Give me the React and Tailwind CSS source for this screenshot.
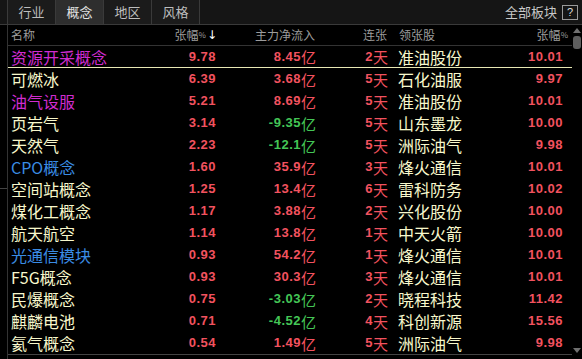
const tabs = ["行业", "概念", "地区", "风格"];

const rows = [
  { name: "资源开采概念", c: "m", zf: "9.78", zl: "8.45", lz: "2", gu: "准油股份", gz: "10.01" },
  { name: "可燃冰", c: "y", zf: "6.39", zl: "3.68", lz: "5", gu: "石化油服", gz: "9.97" },
  { name: "油气设服", c: "m", zf: "5.21", zl: "8.69", lz: "5", gu: "准油股份", gz: "10.01" },
  { name: "页岩气", c: "y", zf: "3.14", zl: "-9.35", lz: "5", gu: "山东墨龙", gz: "10.00" },
  { name: "天然气", c: "y", zf: "2.23", zl: "-12.1", lz: "5", gu: "洲际油气", gz: "9.98" },
  { name: "CPO概念", c: "b", zf: "1.60", zl: "35.9", lz: "3", gu: "烽火通信", gz: "10.01" },
  { name: "空间站概念", c: "y", zf: "1.25", zl: "13.4", lz: "6", gu: "雷科防务", gz: "10.02" },
  { name: "煤化工概念", c: "y", zf: "1.17", zl: "3.88", lz: "2", gu: "兴化股份", gz: "10.00" },
  { name: "航天航空", c: "y", zf: "1.14", zl: "13.8", lz: "1", gu: "中天火箭", gz: "10.00" },
  { name: "光通信模块", c: "b", zf: "0.93", zl: "54.2", lz: "1", gu: "烽火通信", gz: "10.01" },
  { name: "F5G概念", c: "y", zf: "0.93", zl: "30.3", lz: "3", gu: "烽火通信", gz: "10.01" },
  { name: "民爆概念", c: "y", zf: "0.75", zl: "-3.03", lz: "2", gu: "晓程科技", gz: "11.42" },
  { name: "麒麟电池", c: "y", zf: "0.71", zl: "-4.52", lz: "4", gu: "科创新源", gz: "15.56" },
  { name: "氦气概念", c: "y", zf: "0.54", zl: "1.49", lz: "5", gu: "洲际油气", gz: "9.98" },
];

const cjk = "font-['Noto_Sans_CJK_SC',sans-serif]";
const num = "font-['Liberation_Sans',sans-serif] font-bold text-[13px] tracking-[0.5px]";

function nameColor(c) {
  if (c === "m") return "text-[#d02cd0]";
  if (c === "b") return "text-[#3a8ce4]";
  return "text-[#f8f8cc]";
}

function Row({ r, first }) {
  const neg = r.zl.startsWith("-");
  const flow = neg ? "text-[#44c656]" : "text-[#f2525f]";
  return (
    <div
      className={
        "flex h-[22px] items-center " +
        (first ? "border-b border-[#e8e8b4]" : "")
      }
    >
      <div className={`w-[150px] pl-[3px] text-[16px] leading-none ${cjk} ${nameColor(r.c)}`}>
        {r.name}
      </div>
      <div className={`w-[58px] text-right text-[#f2525f] ${num}`}>{r.zf}</div>
      <div className={`w-[100px] flex justify-end items-center ${flow}`}>
        <span className={num}>{r.zl}</span>
        <span className={`text-[15px] leading-none ${cjk}`}>亿</span>
      </div>
      <div className="w-[72px] flex justify-end items-center text-[#f2525f]">
        <span className={num}>{r.lz}</span>
        <span className={`text-[15px] leading-none ${cjk}`}>天</span>
      </div>
      <div className={`w-[110px] pl-[10px] text-[16px] leading-none text-[#f8f8cc] ${cjk}`}>
        {r.gu}
      </div>
      <div className={`w-[65px] text-right text-[#f2525f] ${num}`}>{r.gz}</div>
    </div>
  );
}

export default function App() {
  return (
    <div className={`w-[582px] h-[359px] bg-black overflow-hidden ${cjk}`}>
      {/* tab bar */}
      <div className="flex h-[25px] bg-[#151515] border-b border-[#3a3a3a]">
        <div className="w-[8px] border-r border-[#3a3a3a]" />
        {tabs.map((t) => (
          <div
            key={t}
            className={
              "w-[48px] flex items-center justify-center text-[13px] border-r border-[#3a3a3a] " +
              (t === "概念"
                ? "bg-[#2e2e2e] text-[#e2e2e2]"
                : "bg-[#1b1b1b] text-[#bdbdbd]")
            }
          >
            {t}
          </div>
        ))}
        <div className="flex-1" />
        <div className="flex items-center pr-[4px] text-[13px] text-[#c8c8c8]">
          <span>全部板块</span>
          <span className="ml-[5px] w-[16px] h-[15px] border border-[#9a9a9a] flex items-center justify-center text-[11px] leading-none text-[#dcdcdc] font-['Liberation_Sans',sans-serif]">
            ?
          </span>
        </div>
      </div>

      <div className="flex">
        {/* left gutter */}
        <div className="w-[8px] h-[334px] border-r border-[#333]">
          <div className="mt-[163px] h-px w-[7px] bg-[#444]" />
        </div>

        {/* table */}
        <div className="w-[564px] h-[330px] border-b border-[#444]">
          <div className="flex h-[21px] items-center border-b border-[#333] text-[12px] text-[#9c9c9c]">
            <div className="w-[150px] pl-[3px]">名称</div>
            <div className="w-[59px] flex justify-end items-center">
              <span>张幅</span>
              <span className="text-[8px]">%</span>
              <span className="text-white text-[12px] font-['DejaVu_Sans',sans-serif] leading-none ml-[1px]">↓</span>
            </div>
            <div className="w-[98px] text-right">主力净流入</div>
            <div className="w-[72px] text-right">连张</div>
            <div className="w-[111px] pl-[12px]">领张股</div>
            <div className="w-[70px] flex justify-end items-center">
              <span>张幅</span>
              <span className="text-[8px]">%</span>
            </div>
          </div>
          {rows.map((r, i) => (
            <Row key={i} r={r} first={i === 0} />
          ))}
        </div>

        {/* scrollbar */}
        <div className="w-[10px] flex flex-col items-center pt-[3px]">
          <div className="w-0 h-0 border-l-[4px] border-r-[4px] border-b-[5px] border-l-transparent border-r-transparent border-b-[#707070]" />
          <div className="mt-[3px] w-[8px] h-[13px] rounded-[3px] bg-[#5e5e5e]" />
          <div className="flex-1" />
          <div className="mb-[6px] w-0 h-0 border-l-[4px] border-r-[4px] border-t-[5px] border-l-transparent border-r-transparent border-t-[#707070]" />
        </div>
      </div>
    </div>
  );
}
